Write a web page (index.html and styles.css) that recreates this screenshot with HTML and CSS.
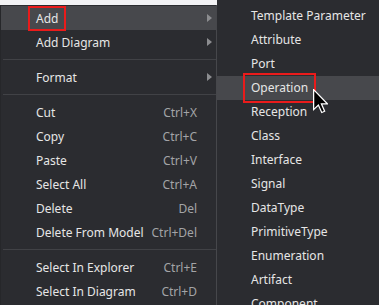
FILE: index.html
```html
<!DOCTYPE html>
<html>
	<head>
		<meta charset="utf-8">
		<title>Context menu</title>
		<link rel="stylesheet" href="styles.css">
	</head>
	<body>
		<div class="screen">
			<div class="menu main">
				<div class="item active"><span class="label"><span class="mark">Add</span></span><span class="key"></span><span class="sub"></span></div>
				<div class="item"><span class="label">Add Diagram</span><span class="key"></span><span class="sub"></span></div>
				<div class="sep"></div>
				<div class="item"><span class="label">Format</span><span class="key"></span><span class="sub"></span></div>
				<div class="sep"></div>
				<div class="item"><span class="label">Cut</span><span class="key">Ctrl+X</span><span class="sub none"></span></div>
				<div class="item"><span class="label">Copy</span><span class="key">Ctrl+C</span><span class="sub none"></span></div>
				<div class="item"><span class="label">Paste</span><span class="key">Ctrl+V</span><span class="sub none"></span></div>
				<div class="item"><span class="label">Select All</span><span class="key">Ctrl+A</span><span class="sub none"></span></div>
				<div class="item"><span class="label">Delete</span><span class="key">Del</span><span class="sub none"></span></div>
				<div class="item"><span class="label">Delete From Model</span><span class="key">Ctrl+Del</span><span class="sub none"></span></div>
				<div class="sep"></div>
				<div class="item"><span class="label">Select In Explorer</span><span class="key">Ctrl+E</span><span class="sub none"></span></div>
				<div class="item"><span class="label">Select In Diagram</span><span class="key">Ctrl+D</span><span class="sub none"></span></div>
			</div>
			<div class="menu submenu">
				<div class="item">Template Parameter</div>
				<div class="item">Attribute</div>
				<div class="item">Port</div>
				<div class="item active"><span class="mark">Operation</span></div>
				<div class="item">Reception</div>
				<div class="item">Class</div>
				<div class="item">Interface</div>
				<div class="item">Signal</div>
				<div class="item">DataType</div>
				<div class="item">PrimitiveType</div>
				<div class="item">Enumeration</div>
				<div class="item">Artifact</div>
				<div class="item">Component</div>
			</div>
			<!-- mouse pointer over the Operation item -->
			<svg class="cursor" width="15" height="25" viewBox="0 0 12 20">
				<polygon points="0.5,0.5 0.5,16.5 4.3,12.8 7,18.8 9.3,17.8 6.7,11.8 11.5,11.8" fill="#000" stroke="#fff" stroke-width="1" stroke-linejoin="miter"/>
			</svg>
		</div>
	</body>
</html>
```

FILE: styles.css
```css
* {
	margin: 0;
	padding: 0;
	box-sizing: border-box;
}

body {
	width: 379px;
	height: 305px;
	overflow: hidden;
	background-color: #f2f2f4;
	font-family: "Noto Sans", "Noto Sans CJK KR", sans-serif;
	font-size: 12px;
	color: #e6e6e6;
}

.screen {
	position: relative;
	display: flex;
	height: 305px;
}

.menu {
	background-color: #2b2c30;
}

.main {
	width: 217px;
	margin-top: 5px;
	padding-top: 1px;
	border-left: 1px solid #26272a;
	border-right: 1px solid #46474b;
}

.submenu {
	flex: 1;
	padding-top: 4px;
}

.item {
	display: flex;
	align-items: center;
	height: 24px;
	line-height: 22px;
	white-space: nowrap;
}

.main .item {
	padding-top: 2px;
}

.item.active {
	background-color: #47484c;
}

.main .label {
	flex: 1;
	padding-left: 35px;
}

.main .key {
	color: #a3a4a7;
}

.main .sub {
	position: relative;
	width: 19px;
	height: 22px;
}

/* submenu arrow */
.main .sub::after {
	content: "";
	position: absolute;
	left: 10px;
	top: 6px;
	border-left: 5px solid #8c8d90;
	border-top: 4px solid transparent;
	border-bottom: 4px solid transparent;
}

.main .sub.none::after {
	display: none;
}

.sep {
	height: 1px;
	margin: 5px 0 5px 2px;
	background-color: #414246;
}

.submenu .item {
	padding-left: 34px;
}

.mark {
	padding: 2px 6px;
	margin: 0 -6px;
	outline: 2px solid #ea1b1b;
}

.cursor {
	position: absolute;
	left: 313px;
	top: 89px;
}
```
